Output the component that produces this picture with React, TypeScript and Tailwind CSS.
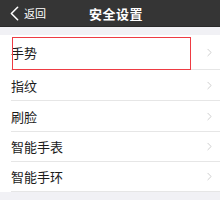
import { ChevronLeft, ChevronRight } from 'lucide-react'

const rows = [
  { label: '手势', h: 'h-[35px]' },
  { label: '指纹', h: 'h-[31px]' },
  { label: '刷脸', h: 'h-[31px]' },
  { label: '智能手表', h: 'h-[30px]' },
  { label: '智能手环', h: 'h-[30px]' },
]

export default function App() {
  return (
    <div className="w-[220px] h-[200px] bg-[#f1f1f5] overflow-hidden font-['Noto_Sans_CJK_SC',sans-serif]">
      {/* Header */}
      <div className="h-[27px] bg-[#353535] flex items-center border-b border-[#2a2a2a]">
        <div className="flex items-center pl-[2px] text-white">
          <ChevronLeft className="w-[25px] h-[25px]" strokeWidth={1.5} />
          <span className="-ml-[3px] text-[11px] leading-none">返回</span>
        </div>
        <h1 className="ml-[43px] text-white text-[13px] font-bold leading-none tracking-[0.5px]">安全设置</h1>
      </div>

      <div className="h-[8px]" />

      {/* List */}
      <div className="relative bg-white">
        {rows.map((row) => (
          <div key={row.label} className={`${row.h} pl-[11px] flex flex-col`}>
            <div className="flex-1 flex items-center pr-[4px] border-b border-[#e6e6e6]">
              <span className="flex-1 text-[13px] text-[#1c1c1c] leading-none">{row.label}</span>
              <ChevronRight className="w-[13px] h-[13px] text-[#c4c4c4]" strokeWidth={1.5} />
            </div>
          </div>
        ))}

        {/* annotation box */}
        <div className="absolute left-[12px] top-[2px] w-[179px] h-[33px] border-[1.5px] border-[#ee3b43]" />
      </div>
    </div>
  )
}
